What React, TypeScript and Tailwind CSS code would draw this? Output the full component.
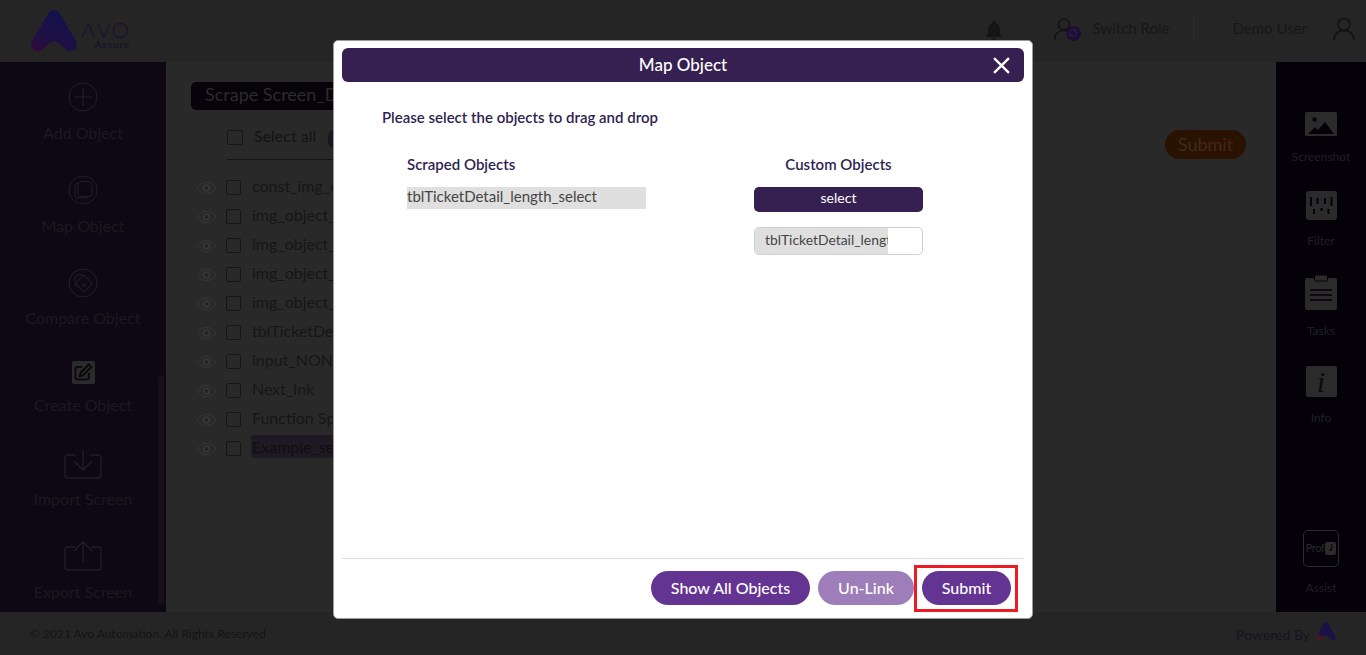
import { ReactNode } from "react";

const DIM = "#221e28";
const ITEMS = [
  "const_img_object",
  "img_object_1",
  "img_object_2",
  "img_object_3",
  "img_object_4",
  "tblTicketDetail",
  "input_NONAME",
  "Next_lnk",
  "Function Spec",
  "Example_select",
];

function LogoMark({ className, id, accent = "#2c0b3a" }: { className: string; id: string; accent?: string }) {
  return (
    <svg viewBox="0 0 48 44" className={className}>
      <defs>
        <linearGradient id={id} x1="0.7" y1="0.2" x2="0.2" y2="1">
          <stop offset="0" stopColor="#14114a" />
          <stop offset="0.6" stopColor="#1e1045" />
          <stop offset="1" stopColor={accent} />
        </linearGradient>
      </defs>
      <path
        d="M24 1c-3 0-5 1.500-6.500 4.500L2 32c-3 5-1 11 5 11 3 0 5-1.500 7-3.500l6-5c2.500-2 5.500-2 8 0l6 5c2 2 4 3.500 7 3.500 6 0 8-6 5-11L30.500 5.500C29 2.500 27 1 24 1z"
        fill={`url(#${id})`}
      />
    </svg>
  );
}

function Header() {
  return (
    <header className="h-[62px] shrink-0 bg-[#252525] flex items-center pl-[30px] pr-[10px]">
      <LogoMark id="logoMain" className="w-[48px] h-[43px] -mt-[2px]" />
      <div className="ml-[3px] mt-[8px] text-[#1b1130]">
        <p className="text-[22px] font-light tracking-[1px] h-[16px] leading-[16px]">ΛVO</p>
        <p className="mt-[1px] text-[10px] h-[10px] leading-[10px] font-bold tracking-[0.8px] text-right text-[#17132c]">Assure</p>
      </div>

      <div className="ml-auto mb-[5px] flex items-center">
        <svg viewBox="0 0 24 24" className="w-[22px] h-[22px] mr-[48px] mt-[2px]" fill="#151515">
          <path d="M12 2c-1 0-1.800.8-1.800 1.800v.6C7.300 5.200 5.500 7.800 5.500 11v5L3.500 18.500v1h17v-1l-2-2.500v-5c0-3.200-1.800-5.800-4.700-6.600v-.6C13.800 2.800 13 2 12 2zM9.800 20.500c0 1.200 1 2.200 2.200 2.200s2.200-1 2.200-2.200z" />
        </svg>
        <div className="relative w-[28px] h-[24px] mr-[12px]">
          <svg viewBox="0 0 24 24" className="w-[24px] h-[24px]" fill="none" stroke="#141414" strokeWidth="1.700">
            <circle cx="11" cy="7.500" r="5.500" />
            <path d="M1.500 23c0-6 4-9.500 9.500-9.500 2 0 3.500.4 5 1.300" />
          </svg>
          <span className="absolute right-0 bottom-0 w-[15px] h-[15px] rounded-full bg-[#1c0f35] flex items-center justify-center">
            <svg viewBox="0 0 12 12" className="w-[10px] h-[10px]" fill="none" stroke="#32244d" strokeWidth="1.200">
              <path d="M2 7a4 4 0 0 1 7-3.500M10 5a4 4 0 0 1-7 3.500M9.500 1.500v2.200H7.300M2.500 10.500V8.300h2.200" />
            </svg>
          </span>
        </div>
        <span className="text-[15px] text-[#171717] w-[100px]">Switch Role</span>
        <div className="w-px h-[24px] bg-[#2e2e2e] mr-[39px]" />
        <span className="text-[15px] text-[#171717] mr-[25px]">Demo User</span>
        <svg viewBox="0 0 24 24" className="w-[24px] h-[25px]" fill="none" stroke="#141414" strokeWidth="1.800">
          <circle cx="12" cy="8" r="6" />
          <path d="M2 24c0-6 4-10 10-10s10 4 10 10" />
        </svg>
      </div>
    </header>
  );
}

const stroke = { fill: "none", stroke: DIM, strokeWidth: 1 };

const LEFT_NAV: { label: string; h: string; gap: string; icon: ReactNode }[] = [
  {
    label: "Add Object",
    h: "h-[93px]",
    gap: "mt-[10px]",
    icon: (
      <svg viewBox="0 0 30 30" className="w-[30px] h-[30px]" {...stroke}>
        <circle cx="15" cy="15" r="14" />
        <path d="M15 6v18M6 15h18" />
      </svg>
    ),
  },
  {
    label: "Map Object",
    h: "h-[93px]",
    gap: "mt-[10px]",
    icon: (
      <svg viewBox="0 0 30 30" className="w-[30px] h-[30px]" {...stroke}>
        <circle cx="15" cy="15" r="14" />
        <rect x="7" y="8" width="14" height="15" rx="3" />
        <rect x="10" y="6.500" width="14" height="15" rx="3" fill="#0e0814" />
      </svg>
    ),
  },
  {
    label: "Compare Object",
    h: "h-[89px]",
    gap: "mt-[9px]",
    icon: (
      <svg viewBox="0 0 30 30" className="w-[30px] h-[30px]" {...stroke}>
        <circle cx="15" cy="15" r="14" />
        <rect x="7" y="7" width="11" height="11" rx="2" />
        <rect x="10" y="9.500" width="12" height="12" rx="2" transform="rotate(45 16 15.500)" fill="#0e0814" />
        <path d="M18 15l-3 3M15 15.500V18h2.500" />
      </svg>
    ),
  },
  {
    label: "Create Object",
    h: "h-[92px]",
    gap: "mt-[7px]",
    icon: (
      <div className="w-[23px] h-[23px] bg-[#2b2b2b] rounded-[2px] flex items-center justify-center">
        <svg viewBox="0 0 24 24" className="w-[20px] h-[20px]" fill="none" stroke="#0a0a0a" strokeWidth="2.400">
          <path d="M19 13v6a2 2 0 0 1-2 2H5a2 2 0 0 1-2-2V8a2 2 0 0 1 2-2h6" />
          <path d="M8 17l1-4L19 3l3 3-10 10z" />
        </svg>
      </div>
    ),
  },
  {
    label: "Import Screen",
    h: "h-[92px]",
    gap: "mt-[9px]",
    icon: (
      <svg viewBox="0 0 38 30" className="w-[38px] h-[30px]" {...stroke} strokeWidth="1.300">
        <path d="M11 6H4a3 3 0 0 0-3 3v17a3 3 0 0 0 3 3h30a3 3 0 0 0 3-3V9a3 3 0 0 0-3-3h-7" />
        <path d="M19 1v20M10 12l9 9 9-9" />
      </svg>
    ),
  },
  {
    label: "Export Screen",
    h: "h-[93px]",
    gap: "mt-[10px]",
    icon: (
      <svg viewBox="0 0 38 30" className="w-[38px] h-[30px]" {...stroke} strokeWidth="1.300">
        <path d="M11 6H4a3 3 0 0 0-3 3v17a3 3 0 0 0 3 3h30a3 3 0 0 0 3-3V9a3 3 0 0 0-3-3h-7" />
        <path d="M19 21V1M10 10l9-9 9 9" />
      </svg>
    ),
  },
];

function LeftSidebar() {
  return (
    <aside className="relative w-[166px] shrink-0 bg-[#0e0814] pt-[20px] overflow-hidden">
      {LEFT_NAV.map((n) => (
        <div key={n.label} className={`${n.h} flex flex-col items-center`}>
          <div className="h-[30px] flex items-center justify-center">{n.icon}</div>
          <p className={`${n.gap} text-[16px] leading-[22px] text-[#1c1820]`}>{n.label}</p>
        </div>
      ))}
      <div className="absolute left-[158px] top-[313px] w-[6px] h-[230px] rounded-full bg-[#15101b]" />
    </aside>
  );
}

function EyeIcon() {
  return (
    <svg viewBox="0 0 22 14" className="w-[21px] h-[14px]">
      <path d="M1 7c3-4 6.200-6 10-6s7 2 10 6c-3 4-6.200 6-10 6S4 11 1 7z" fill="none" stroke="#383838" strokeWidth="1" />
      <circle cx="11" cy="7" r="4" fill="#363636" />
      <circle cx="11" cy="7" r="2" fill="#242424" />
    </svg>
  );
}

function Box({ className = "" }: { className?: string }) {
  return <div className={`w-[15px] h-[15px] rounded-[2px] border border-[#161616] ${className}`} />;
}

function Content() {
  return (
    <main className="flex-1 bg-[#292929] pl-[25px] pt-[20px] relative">
      <div className="w-[300px] h-[28px] rounded-[5px] bg-[#06030a] pl-[14px] text-[18px] leading-[24px] text-[#2b2b2b] whitespace-nowrap overflow-hidden">
        Scrape Screen_Details
      </div>
      <div className="ml-[36px] mt-[20px] h-[30px] w-[200px] flex items-start border-b border-[#141414]">
        <Box className="w-[16px] h-[15px]" />
        <span className="ml-[11px] -mt-[3px] text-[16px] leading-[18px] text-[#141414]">Select all</span>
        <span className="ml-[12px] w-[12px] h-[18px] rounded-full bg-[#1a1722]" />
      </div>
      <ul className="mt-[13px] ml-[5px]">
        {ITEMS.map((t) => (
          <li key={t} className="h-[29px] flex items-center">
            <EyeIcon />
            <Box className="ml-[9px]" />
            <span
              className={`ml-[10px] mb-[4px] px-[1px] text-[16px] leading-[23px] rounded-[3px] whitespace-nowrap ${
                t === "Example_select" ? "bg-[#1e1a23] text-[#0f0f0f]" : "text-[#161616]"
              }`}
            >
              {t}
            </span>
          </li>
        ))}
      </ul>
      <button className="absolute left-[999px] top-[68px] w-[81px] h-[29px] rounded-full bg-[#2a1200] text-[18px] text-[#40291a]">
        Submit
      </button>
    </main>
  );
}

const RIGHT_LIGHT = "#2b2b2b";

const RIGHT_NAV: { label: string; h: string; icon: ReactNode }[] = [
  {
    label: "Screenshot",
    h: "h-[79px]",
    icon: (
      <svg viewBox="0 0 32 24" className="w-[32px] h-[24px]">
        <rect width="32" height="24" rx="1.500" fill={RIGHT_LIGHT} />
        <circle cx="9.500" cy="7.500" r="2.200" fill="#040208" />
        <path d="M3 22l7-7 3 3 7-8 9 12z" fill="#040208" />
      </svg>
    ),
  },
  {
    label: "Filter",
    h: "h-[84px]",
    icon: (
      <svg viewBox="0 0 31 29" className="w-[31px] h-[29px]">
        <rect width="31" height="29" rx="3" fill={RIGHT_LIGHT} />
        <path d="M5 6v9M11.500 7v6M19 7v6M25.500 6v9M8 18v5M15.500 17v3M22.500 18v5" stroke="#040208" strokeWidth="2" />
      </svg>
    ),
  },
  {
    label: "Tasks",
    h: "h-[91px]",
    icon: (
      <svg viewBox="0 0 32 35" className="w-[32px] h-[35px]">
        <rect y="3" width="32" height="32" rx="2" fill={RIGHT_LIGHT} />
        <rect x="9.500" y="0" width="13" height="6" rx="1" fill={RIGHT_LIGHT} stroke="#040208" />
        <path d="M5 15h22M5 20h22M5 25h22" stroke="#040208" strokeWidth="1.500" />
      </svg>
    ),
  },
  {
    label: "Info",
    h: "h-[164px]",
    icon: (
      <div className="w-[31px] h-[31px] rounded-[2px] bg-[#2b2b2b] flex items-center justify-center font-['Liberation_Serif',serif] italic text-[30px] leading-none text-[#0a0a0a]">
        i
      </div>
    ),
  },
  {
    label: "Assist",
    h: "h-[65px]",
    icon: (
      <div className="w-[36px] h-[37px] rounded-[5px] border border-[#2b2b2b] flex items-center justify-center gap-[1px] text-[11px] text-[#27272a] tracking-[-0.5px]">
        Prof
        <span className="w-[11px] h-[13px] rounded-[2px] bg-[#2b2b2b] text-[9px] leading-[12px] text-center text-[#040208] font-bold">
          J
        </span>
      </div>
    ),
  },
];

function RightSidebar() {
  return (
    <aside className="w-[90px] shrink-0 bg-[#040208] pt-[50px] flex flex-col items-center">
      {RIGHT_NAV.map((n) => (
        <div key={n.label} className={`${n.h} flex flex-col items-center`}>
          {n.icon}
          <p className="mt-[14px] text-[12px] leading-[14px] text-[#201f24]">{n.label}</p>
        </div>
      ))}
    </aside>
  );
}

function Footer() {
  return (
    <footer className="h-[43px] shrink-0 bg-[#252525] flex items-center pl-[30px] pr-[30px]">
      <span className="text-[12px] text-[#141414]">© 2021 Avo Automation. All Rights Reserved</span>
      <span className="ml-auto text-[14px] text-[#151322] mt-[2px]">Powered By</span>
      <LogoMark id="logoFoot" accent="#4a1f10" className="w-[20px] h-[19px] ml-[6px] -mt-[5px]" />
    </footer>
  );
}

function MapObjectModal() {
  return (
    <div className="absolute left-[333px] top-[40px] w-[700px] h-[579px] bg-white rounded-[5px] border border-[#9a9a9a] pt-[7px] px-[8px] pb-[8px] flex flex-col text-[#2f1f52]">
      <div className="h-[34px] shrink-0 rounded-[6px] bg-[#352051] relative flex items-center justify-center text-[17px] font-medium text-white">
        Map Object
        <svg
          viewBox="0 0 16 16"
          className="absolute right-[14px] top-[9px] w-[17px] h-[17px]"
          fill="none"
          stroke="#fff"
          strokeWidth="2.200"
        >
          <path d="M1 1l14 14M15 1L1 15" />
        </svg>
      </div>

      <div className="flex-1">
        <p className="mt-[26px] ml-[40px] text-[15px] leading-[19px] font-semibold">
          Please select the objects to drag and drop
        </p>
        <div className="mt-[28px] flex">
          <div className="ml-[65px] w-[239px]">
            <p className="text-[15px] leading-[19px] font-semibold">Scraped Objects</p>
            <p className="mt-[13px] h-[22px] bg-[#dfdfdf] text-[15px] leading-[19px] text-[#454545]">
              tblTicketDetail_length_select
            </p>
          </div>
          <div className="ml-[108px] w-[169px]">
            <p className="text-[15px] leading-[19px] font-semibold text-center">Custom Objects</p>
            <div className="mt-[13px] h-[25px] rounded-[5px] bg-[#352051] text-white text-[14px] leading-[21px] text-center">
              select
            </div>
            <div className="mt-[15px] h-[28px] rounded-[5px] border border-[#cfcfcf] bg-white overflow-hidden">
              <div className="w-[133px] h-full bg-[#dfdfdf] pl-[10px] text-[13.9px] leading-[23px] text-[#454545] overflow-hidden whitespace-nowrap">
                tblTicketDetail_length_select
              </div>
            </div>
          </div>
        </div>
      </div>

      <div className="h-[52px] shrink-0 border-t border-[#e0e0e0] flex items-start justify-end pt-[12px] pr-[13px] text-[16px] font-medium text-white">
        <button className="w-[159px] h-[34px] rounded-full bg-[#643493]">Show All Objects</button>
        <button className="ml-[8px] w-[96px] h-[34px] rounded-full bg-[#9d7eb9]">Un-Link</button>
        <div className="relative ml-[8px]">
          <button className="block w-[89px] h-[34px] rounded-full bg-[#643493]">Submit</button>
          <div className="absolute -left-[8px] -right-[7px] -top-[6px] -bottom-[7px] border-[3px] border-[#ed1c24]" />
        </div>
      </div>
    </div>
  );
}

export default function App() {
  return (
    <div className="relative w-[1366px] h-[655px] overflow-hidden flex flex-col font-['Lato','Open_Sans',sans-serif]">
      <Header />
      <div className="flex-1 flex min-h-0">
        <LeftSidebar />
        <Content />
        <RightSidebar />
      </div>
      <Footer />
      <MapObjectModal />
    </div>
  );
}
